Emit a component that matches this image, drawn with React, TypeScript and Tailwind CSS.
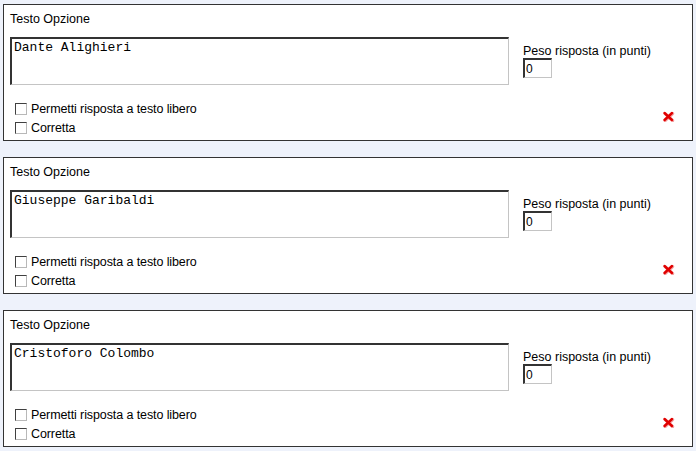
import React from "react";

const options = ["Dante Alighieri", "Giuseppe Garibaldi", "Cristoforo Colombo"];

function Checkbox({ label }: { label: string }) {
  return (
    <div className="flex items-center h-[19px] leading-[19px]">
      <span className="inline-block w-[12px] h-[12px] bg-white border border-t-[#404040] border-l-[#404040] border-r-[#b8b8b8] border-b-[#b8b8b8] ml-[5px] mr-[4px] -mt-[1px]" />
      <span>{label}</span>
    </div>
  );
}

function DeleteIcon() {
  return (
    <svg width="13" height="11" viewBox="0 0 13 11">
      <path d="M2.5 2 L10 9 M10 2 L2.5 9" stroke="#f4a0a0" strokeWidth="3.2" strokeLinecap="round" transform="translate(0.6,0.6)" />
      <path d="M2.5 2 L10 9 M10 2 L2.5 9" stroke="#e00000" strokeWidth="2.4" strokeLinecap="round" />
    </svg>
  );
}

function OptionPanel({ text }: { text: string }) {
  return (
    <div className="border border-[#333] bg-white h-[137px] pl-[6px] mb-[16px]">
      <div className="pt-[7px] leading-[14px]">Testo Opzione</div>
      <div className="flex mt-[11px]">
        <textarea
          defaultValue={text}
          readOnly
          className="w-[499px] h-[48px] resize-none outline-none border-t-2 border-l-2 border-r border-b border-t-[#333] border-l-[#333] border-r-[#c4c4c4] border-b-[#c4c4c4] px-[2px] pt-[1px] text-[13px] leading-[15px] text-black"
          style={{ fontFamily: '"Liberation Mono", "DejaVu Sans Mono", monospace' }}
        />
        <div className="ml-[14px] pt-[7px]">
          <div className="leading-[14px]">Peso risposta (in punti)</div>
          <input
            defaultValue="0"
            readOnly
            className="block w-[29px] h-[20px] outline-none border-t-2 border-l-2 border-r border-b border-t-[#333] border-l-[#333] border-r-[#c4c4c4] border-b-[#c4c4c4] px-[1px] text-[12px]"
          />
        </div>
      </div>
      <div className="flex items-center justify-between mt-[15px]">
        <div className="tracking-[-0.1px]">
          <Checkbox label="Permetti risposta a testo libero" />
          <Checkbox label="Corretta" />
        </div>
        <div className="mr-[17px] -mt-[5px]">
          <DeleteIcon />
        </div>
      </div>
    </div>
  );
}

export default function App() {
  return (
    <div
      className="min-h-screen bg-[#eef2fb] pt-[4px] px-[3px] text-[12.5px] text-black"
      style={{ fontFamily: '"Liberation Sans", Arial, sans-serif' }}
    >
      {options.map((o) => (
        <OptionPanel key={o} text={o} />
      ))}
    </div>
  );
}
